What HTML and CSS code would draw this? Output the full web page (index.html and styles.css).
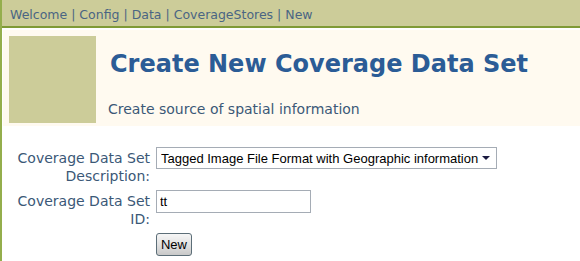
FILE: index.html
```html
<!DOCTYPE html>
<html lang="en">
<head>
    <meta charset="UTF-8">
    <title>Create New Coverage Data Set</title>
    <link rel="stylesheet" href="styles.css">
</head>
<body>
    <div class="page">
        <div class="nav-bar">
            <a href="#">Welcome</a> | <a href="#">Config</a> | <a href="#">Data</a> | <a href="#">CoverageStores</a> | <a href="#">New</a>
        </div>
        <div class="header">
            <div class="logo-box"></div>
            <div class="header-text">
                <h1>Create New Coverage Data Set</h1>
                <p>Create source of spatial information</p>
            </div>
        </div>
        <form class="data-form">
            <table>
                <tr>
                    <td class="label">Coverage Data Set Description:</td>
                    <td>
                        <span class="select-wrap">
                            <select class="type-select">
                                <option>Tagged Image File Format with Geographic information</option>
                            </select>
                        </span>
                    </td>
                </tr>
                <tr>
                    <td class="label">Coverage Data Set ID:</td>
                    <td><input type="text" class="id-input" value="tt"></td>
                </tr>
                <tr>
                    <td></td>
                    <td><button type="button" class="new-button">New</button></td>
                </tr>
            </table>
        </form>
    </div>
</body>
</html>
```

FILE: styles.css
```css
* {
    box-sizing: border-box;
}

body {
    margin: 0;
    font-family: 'DejaVu Sans', Verdana, sans-serif;
    color: #3b5877;
    background: #fff;
}

.page {
    min-height: 100vh;
    border-left: 2px solid #94ae4c;
}

.nav-bar {
    height: 28px;
    padding: 7px 8px 0;
    background: #cccc99;
    border-bottom: 2px solid #7f9a36;
    font-size: 12.5px;
    color: #4a6583;
}

.nav-bar a {
    color: #4a6583;
    text-decoration: none;
}

.header {
    display: flex;
    margin: 2px 0 0 1px;
    padding: 6px 6px 3px;
    background: #fffaf0;
}

.logo-box {
    width: 87px;
    height: 87px;
    background: #cccc99;
    flex-shrink: 0;
}

.header-text {
    padding-left: 14px;
}

.header-text h1 {
    margin: 13px 0 0;
    font-size: 24px;
    line-height: 30px;
    font-weight: bold;
    color: #2b5c96;
}

.header-text p {
    margin: 21px 0 0 -2px;
    font-size: 14px;
    line-height: 18px;
    color: #3b5877;
}

.data-form {
    padding: 21px 0 0 8px;
}

.data-form table {
    border-collapse: collapse;
}

.data-form td {
    padding: 0 2px 5px;
    vertical-align: top;
}

.data-form td.label {
    width: 144px;
    padding: 2px 4px 5px 0;
    text-align: right;
    font-size: 14px;
    line-height: 18px;
}

.select-wrap {
    position: relative;
    display: inline-block;
}

.select-wrap::after {
    content: "";
    position: absolute;
    top: 9px;
    right: 7px;
    border-left: 4px solid transparent;
    border-right: 4px solid transparent;
    border-top: 4px solid #1a1a40;
    pointer-events: none;
}

.type-select {
    display: block;
    width: 341px;
    height: 22px;
    padding: 0 0 0 4px;
    appearance: none;
    font-family: 'Liberation Sans', Arial, sans-serif;
    font-size: 13px;
    color: #000;
    border: 1px solid #a5acb5;
    border-radius: 0;
    background: #fff;
}

.id-input {
    display: block;
    width: 155px;
    height: 23px;
    padding: 2px 3px;
    font-family: 'Liberation Sans', Arial, sans-serif;
    font-size: 13px;
    color: #000;
    border: 1px solid #a5acb5;
}

.new-button {
    width: 36px;
    height: 23px;
    padding: 0;
    font-family: 'Liberation Sans', Arial, sans-serif;
    font-size: 13px;
    color: #000;
    border: 1px solid #5c6e78;
    border-radius: 3px;
    background: linear-gradient(#f6f6f6, #e2e2e2 50%, #c8c8c8);
}
```
